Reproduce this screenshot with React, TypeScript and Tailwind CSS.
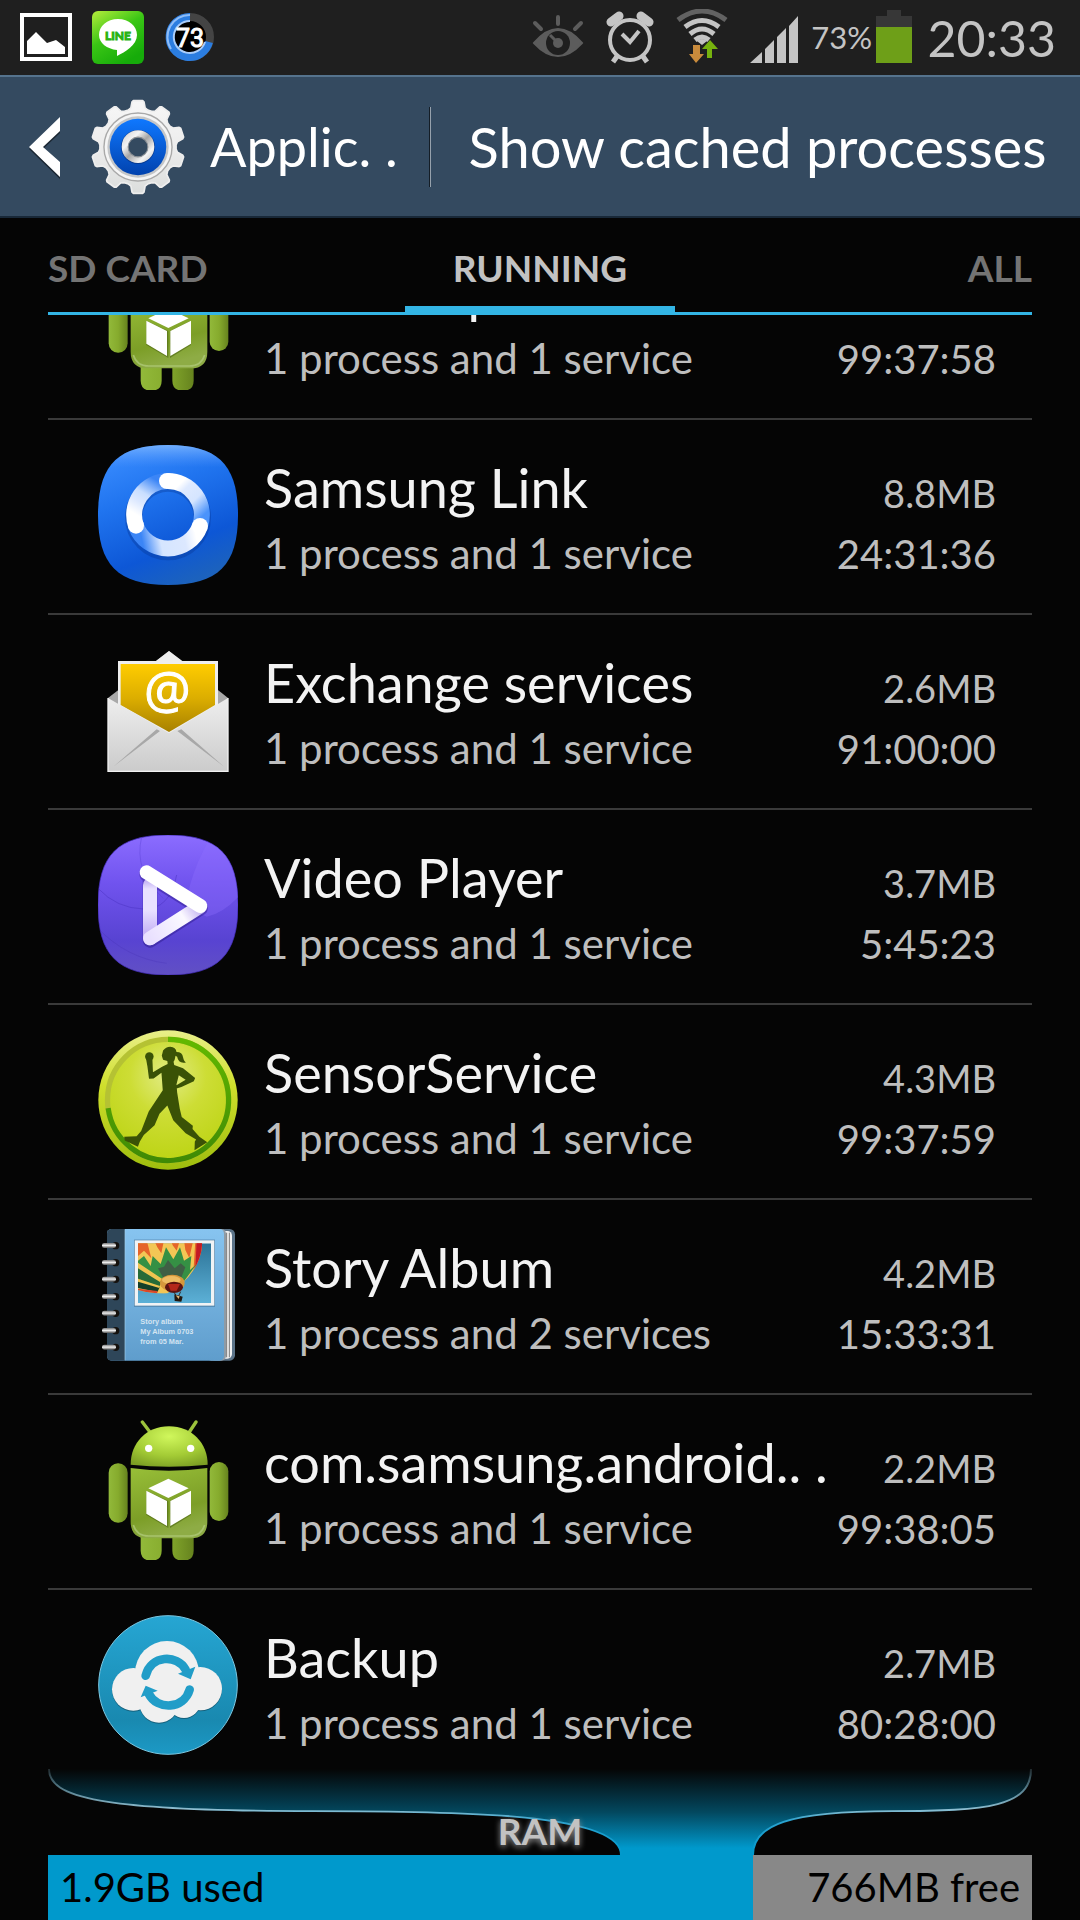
import type { ReactNode } from "react";

const SQUIRCLE = "M264 0C414 0 474 60 474 210S414 420 264 420S54 360 54 210S114 0 264 0Z";

function GearIcon() {
  const points: string[] = [];
  for (let i = 0; i < 10; i++) {
    const base = (i * 36 - 90) * (Math.PI / 180);
    const profile: [number, number][] = [
      [-0.26, 112],
      [-0.18, 117],
      [-0.13, 134],
      [-0.1, 137],
      [0.1, 137],
      [0.13, 134],
      [0.18, 117],
      [0.26, 112],
    ];
    for (const [a, r] of profile) {
      points.push(`${(401 + r * Math.cos(base + a)).toFixed(1)},${(228 + r * Math.sin(base + a)).toFixed(1)}`);
    }
  }
  return (
    <svg viewBox="260 87 282 282" className="size-24 shrink-0" aria-hidden="true">
      <defs>
        <linearGradient id="gearBody" x1="0" y1="0" x2="0" y2="1">
          <stop offset="0" stopColor="#f7f7f7" />
          <stop offset="0.5" stopColor="#ececec" />
          <stop offset="1" stopColor="#dcdedd" />
        </linearGradient>
        <linearGradient id="gearBlue" x1="0" y1="0" x2="0" y2="1">
          <stop offset="0" stopColor="#0f78ff" />
          <stop offset="1" stopColor="#0142ae" />
        </linearGradient>
        <linearGradient id="gearHub" x1="0" y1="0" x2="1" y2="1">
          <stop offset="0" stopColor="#c9c9c9" />
          <stop offset="0.3" stopColor="#f4f4f4" />
          <stop offset="0.5" stopColor="#a5a5a5" />
          <stop offset="0.75" stopColor="#f4f4f4" />
          <stop offset="1" stopColor="#bbb" />
        </linearGradient>
      </defs>
      <polygon points={points.join(" ")} fill="#1c2b3a" transform="translate(0 3)" opacity="0.6" />
      <polygon points={points.join(" ")} fill="url(#gearBody)" stroke="#eeeeee" strokeWidth="5" strokeLinejoin="round" />
      <circle cx="401" cy="228" r="100" fill="#f5f5f5" stroke="#a9a9a9" strokeWidth="4" />
      <circle cx="401" cy="228" r="90" fill="#c4c6c8" />
      <circle cx="401" cy="228" r="83" fill="url(#gearBlue)" />
      <circle cx="401" cy="228" r="50" fill="#063a92" />
      <circle cx="401" cy="227" r="48" fill="url(#gearHub)" />
      <circle cx="401" cy="228" r="29" fill="#344a60" stroke="#8a8f94" strokeWidth="3" />
    </svg>
  );
}

function AndroidIcon() {
  return (
    <svg viewBox="54 60 420 420" className="size-full" aria-hidden="true">
      <defs>
        <radialGradient id="droidHead" cx="0.5" cy="0.25" r="0.8">
          <stop offset="0" stopColor="#d0f75c" />
          <stop offset="0.6" stopColor="#a3cb35" />
          <stop offset="1" stopColor="#7c9f24" />
        </radialGradient>
        <linearGradient id="droidBody" x1="0" y1="0" x2="0.3" y2="1">
          <stop offset="0" stopColor="#98bf38" />
          <stop offset="0.7" stopColor="#7c9e27" />
          <stop offset="1" stopColor="#8eac45" />
        </linearGradient>
        <linearGradient id="droidLimb" x1="0" y1="0" x2="1" y2="0">
          <stop offset="0" stopColor="#92b93a" />
          <stop offset="0.5" stopColor="#86ab2d" />
          <stop offset="1" stopColor="#66831e" />
        </linearGradient>
      </defs>
      <path d="M187 66L212 99M348 66L326 99" stroke="#9dc33c" strokeWidth="10" strokeLinecap="round" />
      <path d="M152 194C152 130 198 79 267 79S383 130 383 194Q267 206 152 194Z" fill="url(#droidHead)" />
      <circle cx="206" cy="145" r="11" fill="#fff" />
      <circle cx="332" cy="145" r="11" fill="#fff" />
      <rect x="86" y="190" width="57" height="178" rx="28" fill="url(#droidLimb)" />
      <rect x="389" y="186" width="56" height="177" rx="28" fill="url(#droidLimb)" />
      <path d="M182 380H245V452Q245 482 214 482T182 452ZM277 380H341V452Q341 482 309 482T277 452Z" fill="url(#droidLimb)" />
      <path d="M152 204Q267 220 382 204V365Q382 415 332 415H202Q152 415 152 365Z" fill="url(#droidBody)" />
      <path d="M160 375Q170 408 206 408H328Q364 408 374 375" fill="none" stroke="#b4cd80" strokeWidth="5" opacity="0.7" />
      <path d="M199 272L265 303V384L199 345ZM333 272L270 303V384L333 345Z" fill="#4f6714" opacity="0.6" />
      <path d="M265 236L326 265L265 294L205 265ZM199 272L261 303V378L199 341ZM333 272L271 303V378L333 341Z" fill="#fff" />
    </svg>
  );
}

function LinkIcon() {
  return (
    <svg viewBox="54 0 420 420" className="size-full" aria-hidden="true">
      <defs>
        <linearGradient id="linkBg" x1="0.2" y1="0" x2="0.6" y2="1">
          <stop offset="0" stopColor="#3a8dff" />
          <stop offset="0.35" stopColor="#2074ef" />
          <stop offset="0.75" stopColor="#0d57d6" />
          <stop offset="1" stopColor="#1c62bd" />
        </linearGradient>
        <linearGradient id="linkShine" x1="0" y1="0" x2="0" y2="1">
          <stop offset="0" stopColor="#8cc0ff" stopOpacity="0.7" />
          <stop offset="0.16" stopColor="#5b9aff" stopOpacity="0" />
        </linearGradient>
        <linearGradient id="arcTop" gradientUnits="userSpaceOnUse" x1="264" y1="110" x2="366" y2="215">
          <stop offset="0.2" stopColor="#fff" />
          <stop offset="0.35" stopColor="#dfeaff" />
          <stop offset="0.65" stopColor="#d5e5ff" />
          <stop offset="1" stopColor="#4b93fb" />
        </linearGradient>
        <linearGradient id="arcBottom" gradientUnits="userSpaceOnUse" x1="360" y1="243" x2="185" y2="280">
          <stop offset="0.1" stopColor="#fff" />
          <stop offset="0.3" stopColor="#dce8ff" />
          <stop offset="0.7" stopColor="#d5e5ff" />
          <stop offset="1" stopColor="#3b85f6" />
        </linearGradient>
        <linearGradient id="arcLeft" gradientUnits="userSpaceOnUse" x1="168" y1="243" x2="245" y2="115">
          <stop offset="0.2" stopColor="#fff" />
          <stop offset="0.45" stopColor="#dce8ff" />
          <stop offset="0.65" stopColor="#c9deff" />
          <stop offset="1" stopColor="#3b85f6" />
        </linearGradient>
      </defs>
      <path d={SQUIRCLE} fill="url(#linkBg)" />
      <path d={SQUIRCLE} fill="url(#linkShine)" />
      <circle cx="264" cy="217" r="103" fill="none" stroke="#06358f" strokeWidth="52" opacity="0.35" />
      <g fill="none" strokeWidth="48">
        <path d="M168 243A102 102 0 0 1 262 108" stroke="url(#arcLeft)" />
        <path d="M262 108A102 102 0 0 1 360 243" stroke="url(#arcTop)" />
        <path d="M360 243A102 102 0 0 1 168 243" stroke="url(#arcBottom)" />
      </g>
      <circle cx="261" cy="108" r="24" fill="#fff" />
      <circle cx="360" cy="243" r="24" fill="#fff" />
      <circle cx="168" cy="242" r="24" fill="#fff" />
    </svg>
  );
}

function MailIcon() {
  return (
    <svg viewBox="54 60 420 420" className="size-full" aria-hidden="true">
      <defs>
        <linearGradient id="mailCard" x1="0" y1="0" x2="0" y2="1">
          <stop offset="0" stopColor="#ffcc00" />
          <stop offset="0.5" stopColor="#dcae00" />
          <stop offset="1" stopColor="#a88100" />
        </linearGradient>
        <linearGradient id="mailBody" x1="0" y1="0" x2="0" y2="1">
          <stop offset="0" stopColor="#eeeeee" />
          <stop offset="1" stopColor="#cbcbcb" />
        </linearGradient>
      </defs>
      <path d="M84 234L267 93L444 234V300H84Z" fill="#a9a9a9" />
      <path d="M225 125L267 93L310 125Z" fill="#eee" />
      <path d="M114 123H414V260L267 345L114 260Z" fill="#eee" />
      <path d="M122 132H405V255L267 336L122 255Z" fill="url(#mailCard)" />
      <path d="M84 234L267 340L444 234V454H84Z" fill="url(#mailBody)" />
      <path d="M230 328L100 440L240 333ZM304 328L432 440L292 333Z" fill="#a8a8a8" />
      <path d="M84 234V454H444V234" fill="none" stroke="#f1f1f1" strokeWidth="4" />
      <text x="262" y="267" textAnchor="middle" fontSize="156" fill="#fff" stroke="#fff" strokeWidth="3" fontFamily="Open Sans, sans-serif">
        @
      </text>
    </svg>
  );
}

function VideoIcon() {
  return (
    <svg viewBox="54 0 420 420" className="size-full" aria-hidden="true">
      <defs>
        <linearGradient id="videoBg" x1="0" y1="0" x2="0" y2="1">
          <stop offset="0" stopColor="#8b6cff" />
          <stop offset="0.35" stopColor="#7053ee" />
          <stop offset="0.75" stopColor="#5843d2" />
          <stop offset="1" stopColor="#6150c4" />
        </linearGradient>
        <linearGradient id="videoSide" gradientUnits="userSpaceOnUse" x1="0" y1="130" x2="0" y2="290">
          <stop offset="0" stopColor="#b7a2ef" />
          <stop offset="0.2" stopColor="#e9e1ff" />
          <stop offset="0.6" stopColor="#e9e1ff" />
          <stop offset="1" stopColor="#c9b6f7" />
        </linearGradient>
        <linearGradient id="videoBase" gradientUnits="userSpaceOnUse" x1="210" y1="310" x2="350" y2="215">
          <stop offset="0" stopColor="#e9e0ff" />
          <stop offset="0.7" stopColor="#fbf9ff" />
          <stop offset="1" stopColor="#c7b8f2" />
        </linearGradient>
        <clipPath id="videoClip">
          <path d={SQUIRCLE} />
        </clipPath>
      </defs>
      <path d={SQUIRCLE} fill="url(#videoBg)" stroke="#4a32c8" strokeWidth="2" />
      <g clipPath="url(#videoClip)">
        <path d="M390 10Q350 80 330 150Q315 215 380 245Q430 235 480 180V0Z" fill="#8f70ff" opacity="0.35" />
        <path d="M54 160Q110 220 190 222T290 120" fill="none" stroke="#4c34c4" strokeWidth="3" opacity="0.5" />
        <path d="M185 5Q160 110 250 190" fill="none" stroke="#5a41d4" strokeWidth="3" opacity="0.4" />
        <path d="M54 280Q140 370 260 385" fill="none" stroke="#4c38b8" strokeWidth="3" opacity="0.4" />
      </g>
      <path
        d="M200 118L362 219L210 316V130"
        fill="none"
        stroke="#24127a"
        strokeWidth="44"
        strokeLinecap="round"
        strokeLinejoin="round"
        opacity="0.4"
      />
      <path d="M210 150V310" stroke="url(#videoSide)" strokeWidth="42" strokeLinecap="round" />
      <path d="M210 310L358 216" stroke="url(#videoBase)" strokeWidth="42" strokeLinecap="round" />
      <path d="M200 112L361 213" stroke="#fff" strokeWidth="42" strokeLinecap="round" />
    </svg>
  );
}

function SensorIcon() {
  return (
    <svg viewBox="50 59 428 428" className="size-full" aria-hidden="true">
      <defs>
        <linearGradient id="sensorRim" x1="0" y1="0" x2="0" y2="1">
          <stop offset="0" stopColor="#e9ef8a" />
          <stop offset="0.4" stopColor="#cfdf2c" />
          <stop offset="1" stopColor="#9fbd0e" />
        </linearGradient>
        <radialGradient id="sensorFace" cx="0.5" cy="0.3" r="0.7">
          <stop offset="0" stopColor="#e2ec86" />
          <stop offset="0.45" stopColor="#cddd35" />
          <stop offset="1" stopColor="#bdd415" />
        </radialGradient>
        <linearGradient id="sensorArc" x1="0" y1="0" x2="0" y2="1">
          <stop offset="0" stopColor="#62b900" />
          <stop offset="1" stopColor="#3f8a05" />
        </linearGradient>
      </defs>
      <circle cx="264" cy="273" r="213" fill="url(#sensorRim)" />
      <circle cx="264" cy="273" r="185" fill="url(#sensorFace)" stroke="#b5c233" strokeWidth="16" />
      <path d="M264 88A185 185 0 1 1 81 298" fill="none" stroke="url(#sensorArc)" strokeWidth="16" />
      <g fill="#3a5206">
        <circle cx="207" cy="140" r="13" />
        <path d="M249 150L245 138L249 122Q257 110 271 110Q288 111 290 126Q308 126 310 142Q313 155 319 158Q296 163 292 141L287 138Q285 152 281 156L283 166L310 176L347 206L343 216L305 233L290 238L290 228L318 211L297 197L290 225L292 250L300 300L306 325L340 352L339 362L360 385L384 402L345 427L346 400L350 394L318 375L280 335L262 290L238 315L223 350L190 380L178 400L172 416L132 397L130 385L168 384L182 368L205 308L248 243L244 190L220 207L206 208L201 170L196 142L216 140L218 188L246 171L263 163L262 154Z" />
      </g>
    </svg>
  );
}

function AlbumIcon() {
  const rings = [707, 758, 808, 860, 910, 962, 1012];
  return (
    <svg viewBox="54 645 420 420" className="size-full" aria-hidden="true">
      <defs>
        <linearGradient id="albumCover" x1="0" y1="0" x2="0" y2="1">
          <stop offset="0" stopColor="#87c4f0" />
          <stop offset="1" stopColor="#5f9dcc" />
        </linearGradient>
        <linearGradient id="albumSky" x1="0" y1="0" x2="0" y2="1">
          <stop offset="0" stopColor="#2c7397" />
          <stop offset="1" stopColor="#5cb0d6" />
        </linearGradient>
        <linearGradient id="albumRing" x1="0" y1="0" x2="0" y2="1">
          <stop offset="0" stopColor="#777" />
          <stop offset="0.5" stopColor="#ececec" />
          <stop offset="1" stopColor="#555" />
        </linearGradient>
        <clipPath id="albumPhoto">
          <rect x="174" y="700" width="219" height="179" />
        </clipPath>
        <clipPath id="albumBalloon">
          <path d="M150 680H366Q372 760 305 822L262 850Q200 852 150 832Z" />
        </clipPath>
      </defs>
      <rect x="390" y="657" width="75" height="395" rx="16" fill="#5b7388" />
      <rect x="390" y="663" width="66" height="383" rx="14" fill="#f2f2f2" />
      <path d="M440 668V1042M448 668V1042" stroke="#777" strokeWidth="3" />
      <rect x="380" y="657" width="58" height="395" rx="14" fill="#8f9ba5" />
      <rect x="81" y="657" width="351" height="395" rx="14" fill="url(#albumCover)" />
      <path d="M135 657H95Q81 657 81 671V1038Q81 1052 95 1052H135Z" fill="#2e4659" />
      <path d="M135 658V1051" stroke="#a3d0ee" strokeWidth="2" />
      {rings.map((y) => (
        <g key={y}>
          <circle cx="107" cy={y} r="11" fill="#15110d" />
          <rect x="66" y={y - 8} width="42" height="15" rx="7" fill="url(#albumRing)" />
        </g>
      ))}
      <rect x="162" y="689" width="243" height="201" fill="#4b7ea5" />
      <rect x="164" y="691" width="239" height="196" fill="#f1f3f5" />
      <g clipPath="url(#albumPhoto)">
        <rect x="174" y="700" width="219" height="179" fill="url(#albumSky)" />
        <g clipPath="url(#albumBalloon)">
          <rect x="150" y="680" width="230" height="190" fill="#f3c655" />
          <path d="M174 690H200L214 745L192 722L174 738ZM222 690H252L244 730L232 712ZM272 690H300L290 722L278 706ZM312 690H340L328 744L316 720ZM346 690H370V760L340 790Z" fill="#e5642a" />
          <path d="M350 690H372V745L346 780Z" fill="#c31a26" />
          <path d="M174 752L192 738L212 768L218 738L242 762L258 712L280 748L300 712L312 752L334 738L330 780L350 762L300 830L245 815L174 800Z" fill="#359044" />
          <path d="M174 768L246 812L238 830L174 806Z" fill="#266b38" />
          <path d="M174 806L240 830L232 846L174 834Z" fill="#153f29" />
          <path d="M174 758L248 808L240 816L174 775ZM174 806L240 828L238 834L174 815Z" fill="#efc450" />
          <path d="M234 775L252 770L264 750L284 775L302 760L316 772L300 812L252 808Z" fill="#3f5f45" />
          <path d="M174 836L232 843L232 851L174 848Z" fill="#d9482b" />
        </g>
        <ellipse cx="277" cy="819" rx="37" ry="25" fill="#d6983c" />
        <ellipse cx="274" cy="810" rx="28" ry="12" fill="#eebc62" />
        <ellipse cx="282" cy="832" rx="27" ry="17" fill="#5c1410" />
        <path d="M264 822H300L290 842H272Z" fill="#b3271a" />
        <path d="M281 846L290 858M302 845L296 858" stroke="#333" strokeWidth="3" />
        <path d="M283 853L308 860L304 875L284 873Z" fill="#24170d" />
        <path d="M287 856L299 859L296 867Z" fill="#e0b671" />
      </g>
      <g fill="#d3e4f1" fontFamily="Liberation Sans, sans-serif" fontWeight="700" fontSize="22">
        <text x="181" y="941">Story album</text>
        <text x="181" y="971">My Album 0703</text>
        <text x="181" y="1001">from 05 Mar.</text>
      </g>
    </svg>
  );
}

function BackupIcon() {
  return (
    <svg viewBox="54 645 420 420" className="size-full" aria-hidden="true">
      <defs>
        <linearGradient id="backupBg" x1="0" y1="0" x2="0" y2="1">
          <stop offset="0" stopColor="#26a6d3" />
          <stop offset="0.75" stopColor="#1989b0" />
          <stop offset="1" stopColor="#1c99c5" />
        </linearGradient>
      </defs>
      <circle cx="264" cy="855" r="208" fill="url(#backupBg)" stroke="#7cc7e1" strokeWidth="3" />
      {[
        { y: 3, fill: "#14607c" },
        { y: 0, fill: "#f0f0f0" },
      ].map(({ y, fill }) => (
        <g key={y} fill={fill} transform={`translate(0 ${y})`}>
          <circle cx="261" cy="819" r="96" />
          <circle cx="160" cy="868" r="64" />
          <circle cx="361" cy="866" r="65" />
          <circle cx="237" cy="909" r="59" />
          <circle cx="312" cy="905" r="49" />
          <rect x="160" y="810" width="200" height="100" />
        </g>
      ))}
      <g fill="none" stroke="#219dc8" strokeWidth="26" strokeLinecap="round">
        <path d="M197 827C212 765 292 762 317 809" />
        <path d="M329 869C312 928 232 932 206 881" />
      </g>
      <path d="M294 821L346 800L332 838ZM197 857L233 872L182 892Z" fill="#219dc8" />
    </svg>
  );
}

type Process = { name: string; detail: string; size: string; time: string; icon: ReactNode };

const processes: Process[] = [
  { name: "com.sec.phone", detail: "1 process and 1 service", size: "", time: "99:37:58", icon: <AndroidIcon /> },
  { name: "Samsung Link", detail: "1 process and 1 service", size: "8.8MB", time: "24:31:36", icon: <LinkIcon /> },
  { name: "Exchange services", detail: "1 process and 1 service", size: "2.6MB", time: "91:00:00", icon: <MailIcon /> },
  { name: "Video Player", detail: "1 process and 1 service", size: "3.7MB", time: "5:45:23", icon: <VideoIcon /> },
  { name: "SensorService", detail: "1 process and 1 service", size: "4.3MB", time: "99:37:59", icon: <SensorIcon /> },
  { name: "Story Album", detail: "1 process and 2 services", size: "4.2MB", time: "15:33:31", icon: <AlbumIcon /> },
  { name: "com.samsung.android.. .", detail: "1 process and 1 service", size: "2.2MB", time: "99:38:05", icon: <AndroidIcon /> },
  { name: "Backup", detail: "1 process and 1 service", size: "2.7MB", time: "80:28:00", icon: <BackupIcon /> },
];

function StatusBar() {
  return (
    <div className="flex h-[75px] shrink-0 items-center justify-between bg-[#1f1f1f] pr-6 pl-5 text-[#c4c4c4]">
      <div className="flex items-center gap-5">
        <svg viewBox="0 0 52 54" className="h-[54px] w-[52px]" aria-hidden="true">
          <rect x="2" y="4" width="48" height="44" fill="none" stroke="#fff" strokeWidth="4" />
          <path d="M7 43V30L16 21L27 32L36 29L45 36V43Z" fill="#fff" />
        </svg>
        <svg viewBox="0 0 52 54" className="h-[54px] w-[52px]" aria-hidden="true">
          <defs>
            <linearGradient id="lineBg" x1="0" y1="0" x2="0.6" y2="1">
              <stop offset="0" stopColor="#b6ec3c" />
              <stop offset="0.5" stopColor="#3ac615" />
              <stop offset="1" stopColor="#16ab0a" />
            </linearGradient>
          </defs>
          <rect width="52" height="53" rx="6" fill="url(#lineBg)" />
          <path d="M26 8C15 8 7 15 7 24C7 32 15 38 25 39V45C33 41 45 34 45 24C45 15 37 8 26 8Z" fill="#fff" />
          <text x="26" y="29" textAnchor="middle" fontSize="12" fontWeight="700" fill="#28b312" stroke="#28b312" strokeWidth="1" fontFamily="Lato, sans-serif">
            LINE
          </text>
        </svg>
        <svg viewBox="0 0 52 54" className="h-[54px] w-[52px]" aria-hidden="true">
          <circle cx="26" cy="26" r="20" fill="#000" stroke="#444" strokeWidth="8" />
          <path d="M26 6A20 20 0 1 0 45 31" fill="none" stroke="#2b7de0" strokeWidth="8" />
          <path d="M26 4A22 22 0 0 0 7 38" fill="none" stroke="#8dbcf7" strokeWidth="2" />
          <path d="M26 10A16 16 0 1 0 41 31" fill="none" stroke="#a9cdfa" strokeWidth="2" />
          <text x="26" y="36" textAnchor="middle" fontSize="25" fill="#fff" stroke="#fff" strokeWidth="1" fontFamily="Roboto, sans-serif">
            73
          </text>
        </svg>
      </div>
      <div className="flex items-center">
        <div className="flex items-center gap-[22px]">
          <svg viewBox="0 0 52 58" className="h-[58px] w-[52px]" aria-hidden="true">
            <g fill="none" stroke="#5c5c5c" strokeLinecap="round">
              <path d="M26 8V15M3 14L9 20M49 14L43 20" strokeWidth="4" />
              <path d="M2 34Q26 6 50 34Q26 60 2 34Z" strokeWidth="2" fill="#5c5c5c" />
            </g>
            <circle cx="26" cy="34" r="12" fill="#1f1f1f" />
            <circle cx="26" cy="34" r="5" fill="#5c5c5c" />
            <path d="M18 26L24 32" stroke="#5c5c5c" strokeWidth="3" />
          </svg>
          <svg viewBox="0 0 48 58" className="h-[58px] w-12" aria-hidden="true">
            <g fill="none" stroke="#c4c4c4">
              <circle cx="24" cy="31" r="20" strokeWidth="4" />
              <path d="M16 25L24 33L33 22" strokeWidth="4" />
              <path d="M5 13L13 7M43 13L35 7" strokeWidth="9" strokeLinecap="round" />
              <path d="M12 46L7 53M36 46L41 53" strokeWidth="5" />
            </g>
          </svg>
          <svg viewBox="0 0 52 58" className="h-[58px] w-[52px]" aria-hidden="true">
            <g fill="none" strokeWidth="5">
              <path d="M2 11Q26 -7 50 11" stroke="#626262" />
              <path d="M9 18Q26 5 43 18" stroke="#c4c4c4" />
              <path d="M14 25Q26 15 38 25" stroke="#c4c4c4" />
              <path d="M19 31Q26 25 33 31" stroke="#c4c4c4" />
            </g>
            <path d="M21 32Q26 28 31 32L26 36Z" fill="#c4c4c4" />
            <path d="M17 36H24V45H28L20 54L13 45H17Z" fill="#c98b3c" />
            <path d="M31 49H36V40H42L34 31L26 40H31Z" fill="#76b20e" />
          </svg>
          <svg viewBox="0 0 48 58" className="h-[58px] w-12" aria-hidden="true">
            <path d="M0 54L12 43V54ZM15 54V40L24 31V54ZM27 54V28L36 19V54ZM39 54V17L48 7V54Z" fill="#c4c4c4" />
          </svg>
        </div>
        <span className="ml-2 w-[66px] text-right text-[31px] leading-none">73%</span>
        <svg viewBox="0 0 36 56" className="ml-1 h-14 w-9" aria-hidden="true">
          <path d="M11 0H25V6H36V20H0V6H11Z" fill="#373737" />
          <path d="M0 17H36V53H0Z" fill="#6e9f18" />
        </svg>
        <span className="ml-3 w-[132px] text-right text-[50px] leading-none">20:33</span>
      </div>
    </div>
  );
}

function Header() {
  return (
    <header className="flex h-[143px] shrink-0 items-center border-t-2 border-b-2 border-t-[#55738d] border-b-[#182838] bg-[#344a60] text-white [text-shadow:0_2px_1px_#18222c]">
      <button type="button" className="flex shrink-0 items-center pl-7" aria-label="Back">
        <svg viewBox="0 0 32 64" className="h-16 w-8" aria-hidden="true">
          <path d="M32 4V18L15 34L32 49V64L1 34Z" fill="#1a2632" />
          <path d="M32 2V16L15 32L32 47V62L1 32Z" fill="#fff" />
        </svg>
        <span className="ml-[30px] flex">
          <GearIcon />
        </span>
        <span className="ml-6 w-[219px] text-left text-[54px] leading-[64px] whitespace-nowrap">Applic. .</span>
      </button>
      <span className="h-20 w-[2px] shrink-0 border-l border-[#141d26] bg-[#96a1ac]" />
      <button type="button" className="flex-1 pr-8 pl-9 text-center text-[56px] leading-[64px] whitespace-nowrap">
        Show cached processes
      </button>
    </header>
  );
}

function Tabs() {
  return (
    <nav
      role="tablist"
      className="mx-12 grid h-[97px] shrink-0 grid-cols-[1fr_270px_1fr] border-b-[3px] border-[#33b5e5] text-[37px] leading-[48px] font-bold text-[#747474]"
    >
      <button type="button" role="tab" aria-selected="false" className="pt-[6px] text-left">
        SD CARD
      </button>
      <button type="button" role="tab" aria-selected="true" className="border-b-[6px] border-[#33b5e5] pt-3 text-center text-[#c2c2c2]">
        RUNNING
      </button>
      <button type="button" role="tab" aria-selected="false" className="pt-[6px] text-right">
        ALL
      </button>
    </nav>
  );
}

function ProcessRow({ name, detail, size, time, icon }: Process) {
  return (
    <li className="h-[195px] border-b-2 border-[#3a3a3a]">
      <button type="button" className="flex h-full w-full items-start pt-[25px] pr-9 pl-[50px] text-left">
        <span className="size-[140px] shrink-0">{icon}</span>
        <span className="ml-[26px] flex min-w-0 flex-1 flex-col pt-[10px]">
          <span className="flex h-[66px] items-baseline justify-between whitespace-nowrap">
            <span className="text-[54px] leading-[66px] text-[#f3f3f3]">{name}</span>
            <span className="text-[38px] leading-[66px] text-[#bebebe]">{size}</span>
          </span>
          <span className="flex h-16 items-baseline justify-between leading-[64px] whitespace-nowrap text-[#bebebe]">
            <span className="text-[42px]">{detail}</span>
            <span className="text-[40px]">{time}</span>
          </span>
        </span>
      </button>
    </li>
  );
}

function RamPanel() {
  return (
    <footer className="mx-12 shrink-0">
      <div className="relative h-[86px]">
        <svg viewBox="0 0 984 92" preserveAspectRatio="none" className="block h-full w-full" aria-hidden="true">
          <defs>
            <linearGradient id="ramGlow" x1="0" y1="0" x2="0" y2="1">
              <stop offset="0" stopColor="#0099cc" stopOpacity="0" />
              <stop offset="0.5" stopColor="#0099cc" stopOpacity="0.45" />
              <stop offset="0.92" stopColor="#0099cc" />
            </linearGradient>
            <linearGradient id="ramEdge" gradientUnits="userSpaceOnUse" x1="0" y1="0" x2="0" y2="92">
              <stop offset="0" stopColor="#8fb8c8" stopOpacity="0.2" />
              <stop offset="0.47" stopColor="#8ebfd2" />
              <stop offset="0.6" stopColor="#2ba3d0" />
              <stop offset="1" stopColor="#0099cc" />
            </linearGradient>
          </defs>
          <path
            d="M0 0C0 30 50 45 264 45C420 45 573 48 573 92H705C705 60 740 45 845 45C940 45 984 40 984 0Z"
            fill="url(#ramGlow)"
          />
          <path
            d="M1 0C1 30 50 45 264 45C420 45 573 48 573 92M705 92C705 60 740 45 845 45C940 45 983 40 983 0"
            fill="none"
            stroke="url(#ramEdge)"
            strokeWidth="2"
          />
        </svg>
        <span className="absolute inset-x-0 bottom-0 text-center text-[37px] leading-[48px] font-bold text-[#c2c2c2] [text-shadow:0_2px_6px_#9a9a9a]">
          RAM
        </span>
      </div>
      <div className="flex h-[65px] items-center bg-[#888888] text-[40px] leading-[65px] whitespace-nowrap text-black">
        <span className="h-full w-[71.6%] bg-[#0099cc] pl-3">1.9GB used</span>
        <span className="flex-1 pr-3 text-right">766MB free</span>
      </div>
    </footer>
  );
}

export default function App() {
  return (
    <div className="flex h-screen flex-col overflow-hidden bg-[#050505] font-['Lato',sans-serif]">
      <StatusBar />
      <Header />
      <Tabs />
      <main className="mx-12 min-h-0 flex-1 overflow-hidden">
        <ul className="-mt-[90px]">
          {processes.map((process, index) => (
            <ProcessRow key={index} {...process} />
          ))}
        </ul>
      </main>
      <RamPanel />
    </div>
  );
}
